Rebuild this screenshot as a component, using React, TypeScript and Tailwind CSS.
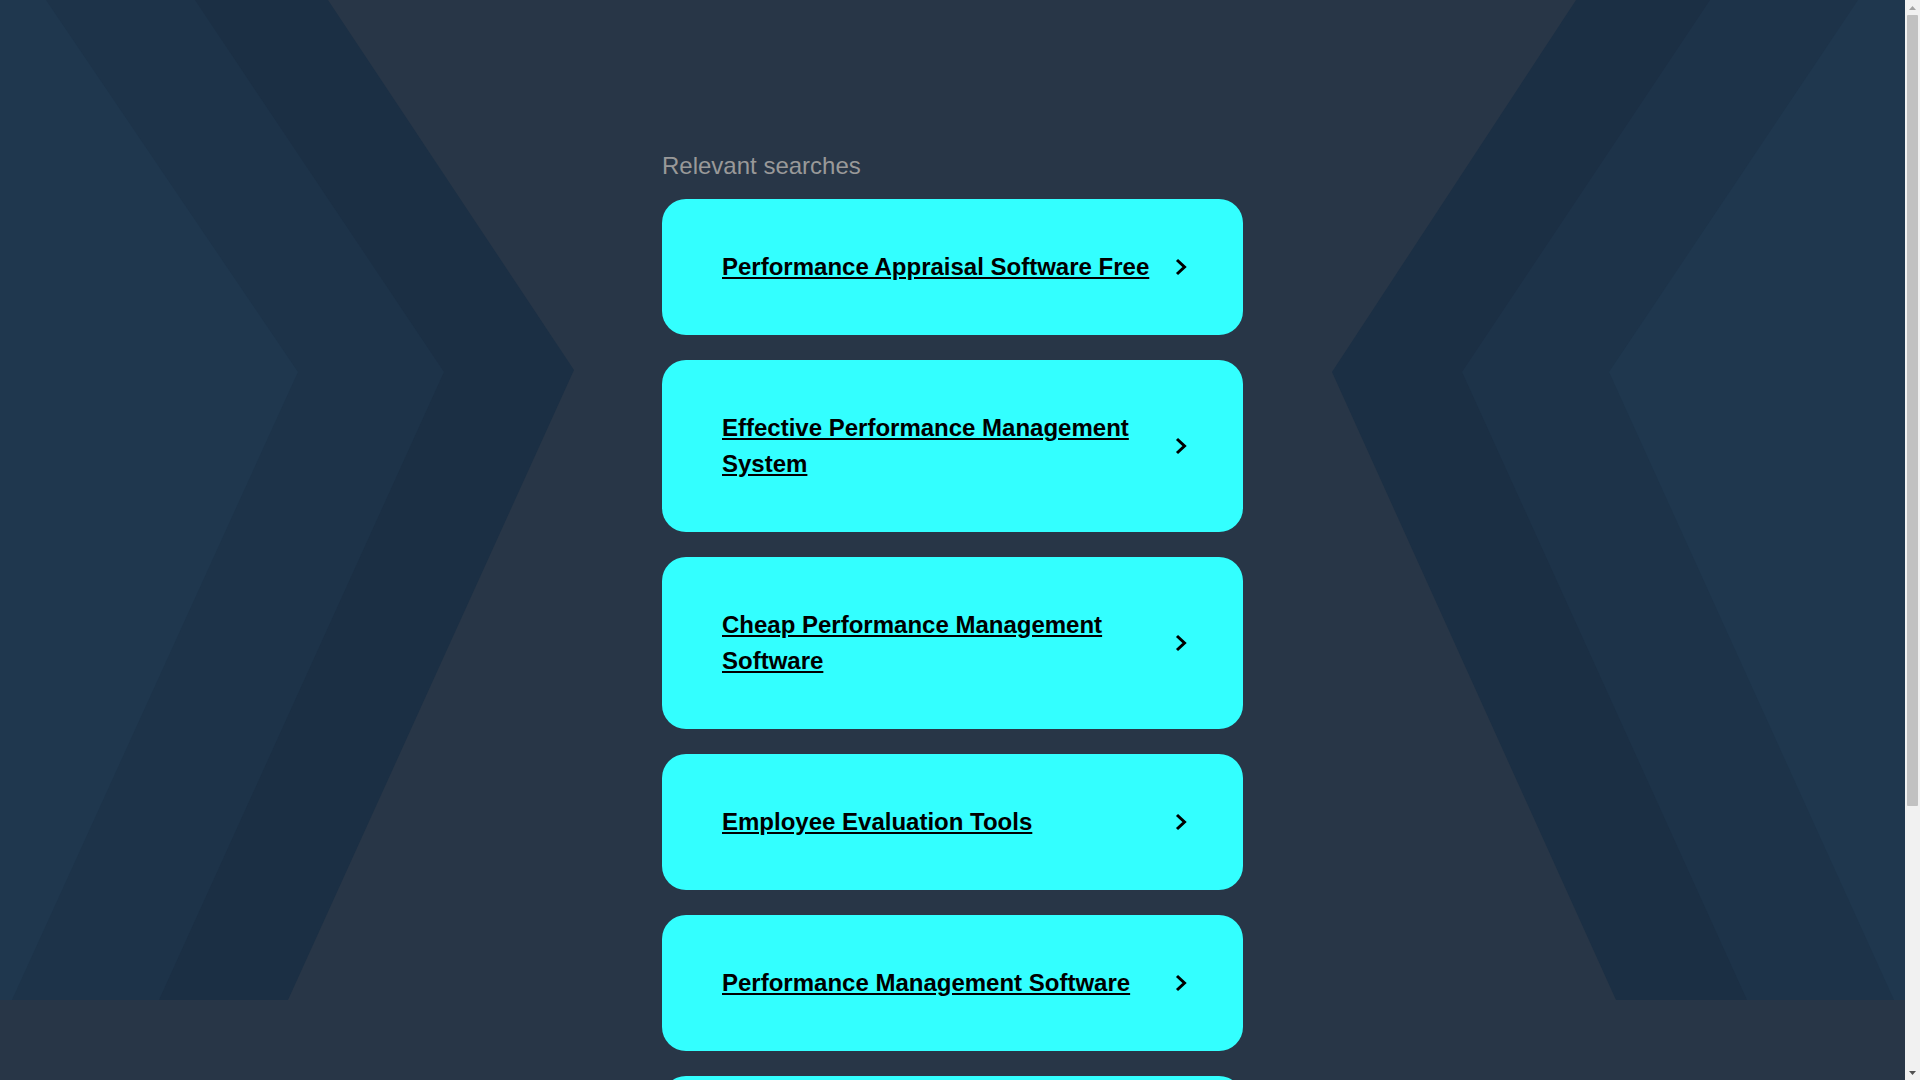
const searches = [
  'Performance Appraisal Software Free',
  'Effective Performance Management System',
  'Cheap Performance Management Software',
  'Employee Evaluation Tools',
  'Performance Management Software',
  'Employee Performance Review Software',
];

function Chevron() {
  return (
    <svg width="12" height="18" viewBox="0 0 12 18" className="shrink-0 ml-[16px]">
      <polyline points="2,2 9.5,9 2,16" fill="none" stroke="#000" strokeWidth="3" strokeLinejoin="miter" />
    </svg>
  );
}

// backdrop chevrons, mirrored around the page centre
function Backdrop() {
  return (
    <svg className="absolute left-0 top-0 w-full h-[1000px]" viewBox="0 0 1905 1000" preserveAspectRatio="none">
      <polygon points="0,0 328,0 574,370 288,1000 0,1000" fill="#1b2f44" />
      <polygon points="0,0 195,0 444,372 159,1000 0,1000" fill="#1d3349" />
      <polygon points="0,0 46,0 298,372 12,1000 0,1000" fill="#1f374e" />
      <polygon points="1905,0 1576,0 1332,372 1616,1000 1905,1000" fill="#1b2f44" />
      <polygon points="1905,0 1710,0 1462,372 1747,1000 1905,1000" fill="#1d3349" />
      <polygon points="1905,0 1858,0 1609,372 1894,1000 1905,1000" fill="#1f374e" />
    </svg>
  );
}

function Scrollbar() {
  return (
    <div className="w-[15px] shrink-0 h-full bg-[#f1f1f1] flex flex-col items-center">
      <div className="h-[15px] flex items-center justify-center">
        <svg width="7" height="4" viewBox="0 0 7 4">
          <polygon points="0,4 3.5,0 7,4" fill="#a3a3a3" />
        </svg>
      </div>
      <div className="w-[11px] h-[791px] rounded-[1px] bg-[#c1c1c1]" />
      <div className="flex-1" />
      <div className="h-[15px] flex items-center justify-center">
        <svg width="7" height="4" viewBox="0 0 7 4">
          <polygon points="0,0 7,0 3.5,4" fill="#505050" />
        </svg>
      </div>
    </div>
  );
}

export default function App() {
  return (
    <div className="flex h-screen overflow-hidden bg-[#283647] font-['Liberation_Sans',Arial,sans-serif]">
      <div className="relative flex-1 overflow-hidden">
        <Backdrop />
        <div className="relative mx-auto w-[581px] pt-[148px] pb-[200px]">
          <h2 className="h-[36px] mb-[15px] text-[24px] leading-[36px] font-normal text-[#999999]">Relevant searches</h2>
          <div className="flex flex-col gap-[25px]">
            {searches.map((s) => (
              <a
                key={s}
                href="#"
                className="flex items-center rounded-[24px] bg-[#33ffff] pl-[60px] pr-[56px] py-[50px]"
              >
                <span className="flex-1 text-[24px] leading-[36px] font-bold text-black underline">{s}</span>
                <Chevron />
              </a>
            ))}
          </div>
        </div>
      </div>
      <Scrollbar />
    </div>
  );
}
